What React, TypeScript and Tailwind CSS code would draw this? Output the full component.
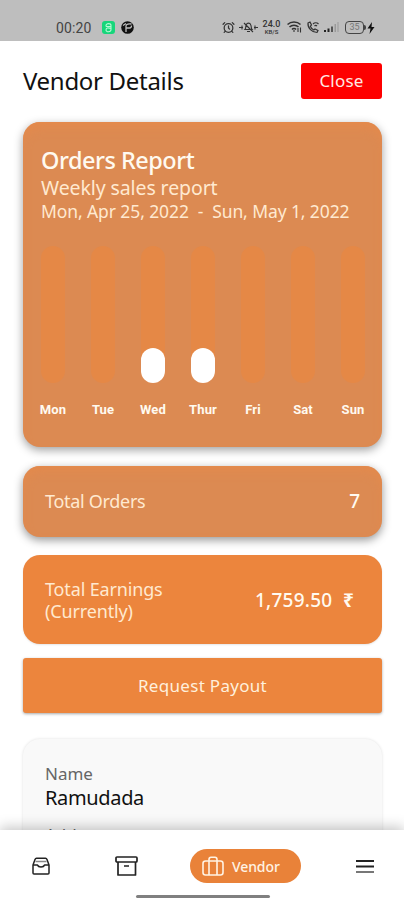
import { AlarmClock } from 'lucide-react';

const days = [
  { label: 'Mon', value: 0 },
  { label: 'Tue', value: 0 },
  { label: 'Wed', value: 35 },
  { label: 'Thur', value: 35 },
  { label: 'Fri', value: 0 },
  { label: 'Sat', value: 0 },
  { label: 'Sun', value: 0 },
];

function StatusBar() {
  return (
    <div className="flex h-[41px] shrink-0 items-start bg-[#bebebe] pt-[20px] pl-[56px] text-[#333]">
      <span className="w-[46px] font-['Roboto',sans-serif] text-[14px] leading-[16px] tracking-[0.1px] text-[#444]">00:20</span>
      <svg width="13" height="14" viewBox="0 0 13 14" className="mt-px shrink-0">
        <rect width="13" height="13" rx="3" fill="#17d67b" />
        <path d="M4 5.500V4.500C4 2 9 2 9 4.500V8.500c0 3-5 3-5 .5S6 6.500 9 7.500M4 5.500h5" fill="none" stroke="#b5fbd4" strokeWidth="1.1" />
      </svg>
      <svg width="13" height="14" viewBox="0 0 13 14" className="ml-[6px] shrink-0">
        <circle cx="6.5" cy="7.5" r="6.3" fill="#111" />
        <path d="M5 12V6C5 4 8 3.500 10.500 4M5 8h3.500c2 0 2-2.500 2-2.500M2 5.500l3-2" fill="none" stroke="#bebebe" strokeWidth="1.3" />
      </svg>
      <AlarmClock size={13} strokeWidth={2.3} className="mt-px ml-[88px] shrink-0" />
      <svg width="19" height="14" viewBox="0 0 19 14" className="ml-[4px] shrink-0" fill="none" stroke="#333" strokeWidth="1.1">
        <path d="M0 7.500h4M15 7.500h4M3 5.500v4M16 5.500v4M6 9.500c1-1 .5-3 1.200-4.500C8 2.500 11 2.500 11.800 5c.7 1.500.2 3.500 1.200 4.500zM8 11.500h3M5 3l9 9" />
      </svg>
      <div className="ml-[4px] flex w-[19px] flex-col items-center gap-[1px] font-['Roboto',sans-serif] font-medium">
        <span className="h-[8px] text-[9px] leading-[8px]">24.0</span>
        <span className="h-[6px] text-[6px] leading-[6px]">KB/S</span>
      </div>
      <svg width="15" height="14" viewBox="0 0 15 14" className="ml-[6px] shrink-0" fill="none" stroke="#333" strokeWidth="1.5">
        <path d="M.5 4.500C4 1 10 1 13.500 4.500M2.500 7c2.500-2.500 6.500-2.500 9 0M5 9.500c1-1.200 3-1.200 4 0" />
        <path d="M7 10v2M11 8v4M13.500 7.500v5" strokeWidth="1.100" />
      </svg>
      <svg width="12" height="14" viewBox="0 0 12 14" className="ml-[5px] shrink-0" fill="none" stroke="#333" strokeWidth="1.2">
        <path d="M1 3l2-1 1.500 3L3.300 6.300c.7 1.700 2 3 3.500 3.700L8 9l3 1.500-1 2C5 12.500.5 8 1 3z" />
        <path d="M6 4c1.500-1.500 4-1.500 5.500 0M7.500 6c.7-.7 1.800-.7 2.500 0" />
      </svg>
      <svg width="15" height="14" viewBox="0 0 15 14" className="ml-[5px] shrink-0">
        <path d="M0 10h2v2H0zM3.500 8.500h2V12h-2z" fill="#222" />
        <path d="M7 6.500h2V12H7z" fill="#555" />
        <path d="M10.500 4h1.500v8h-1.500zM13.500 2h1v10h-1z" fill="#999" />
      </svg>
      <div className="mt-px ml-[6px] flex h-[13px] w-[19px] shrink-0 items-center justify-center rounded-[4px] border border-[#444] font-['Roboto',sans-serif] text-[9px] leading-none text-[#777]">
        35
      </div>
      <div className="mt-[5px] h-[5px] w-[2px] rounded-r bg-[#444]" />
      <svg width="8" height="14" viewBox="0 0 8 14" className="mt-px ml-[1px] shrink-0">
        <path d="M5 1L.5 7.500H3.500L2.500 13 7.500 6H4.500z" fill="#111" />
      </svg>
    </div>
  );
}

function OrdersReport() {
  return (
    <div className="mt-[23px] h-[325px] rounded-[17px] bg-[#dc8a52] pt-[24px] pr-[4px] pl-[5px] text-[#ffe9d0] shadow-[0_3px_10px_rgba(0,0,0,0.38),inset_0_8px_12px_-4px_#e68a4b]">
      <div className="pl-[13px] whitespace-nowrap">
        <h2 className="text-[23.5px] leading-[28px] font-medium tracking-[-0.5px] text-[#fffaf0]">Orders Report</h2>
        <p className="text-[19.5px] leading-[27px] tracking-[-0.1px]">Weekly sales report</p>
        <p className="text-[17.5px] leading-[21px] tracking-[-0.1px] whitespace-pre">Mon, Apr 25, 2022  -  Sun, May 1, 2022</p>
      </div>
      <div className="mt-[24px] flex">
        {days.map((day) => (
          <div key={day.label} className="flex flex-1 flex-col items-center">
            <div className="flex h-[137px] w-[24px] items-end rounded-full bg-[#e58846]">
              <div className="w-full rounded-full bg-white" style={{ height: day.value }} />
            </div>
            <span className="mt-[19px] font-['Roboto',sans-serif] text-[13px] leading-[16px] font-bold tracking-[0.1px] text-[#fffaf0]">
              {day.label}
            </span>
          </div>
        ))}
      </div>
    </div>
  );
}

function BottomNav() {
  return (
    <nav className="relative flex h-[70px] shrink-0 items-start bg-white shadow-[0_-3px_12px_rgba(0,0,0,0.22)]">
      <svg width="18" height="18" viewBox="0 0 18 18" className="mt-[27px] ml-[32px]" fill="none" stroke="#222" strokeWidth="1.5" strokeLinejoin="round">
        <path d="M1 8L3 2.500c.3-.8.7-1.300 1.500-1.300h9c.8 0 1.200.5 1.500 1.300L17 8v8c0 .6-.4 1-1 1H2c-.6 0-1-.4-1-1z" />
        <path d="M1 8h4.500c.5 1.500 1.500 2 3.500 2s3-.5 3.500-2H17" />
        <path d="M3.500 4.500h11" stroke="#888" />
      </svg>
      <svg width="23" height="20" viewBox="0 0 23 20" className="mt-[26px] ml-[65px]" fill="none" stroke="#222" strokeWidth="1.7" strokeLinejoin="round">
        <rect x="1" y="1" width="21" height="5" rx="1" />
        <path d="M3 6v13h17.500V6M9 10h5" />
      </svg>
      <div className="mt-[19px] ml-[52px] flex h-[34px] w-[111px] items-center rounded-full bg-[#e98239] pl-[12px] text-[#fff3e4]">
        <svg width="22" height="20" viewBox="0 0 22 20" fill="none" stroke="currentColor" strokeWidth="1.6">
          <rect x="1" y="5" width="20" height="14" rx="2.500" />
          <path d="M7 19V3.500c0-1.400.8-2.300 2-2.300h4c1.200 0 2 .9 2 2.300V19" />
        </svg>
        <span className="ml-[8px] text-[14px] font-medium tracking-[-0.1px]">Vendor</span>
      </div>
      <svg width="18" height="14" viewBox="0 0 18 14" className="mt-[29px] ml-[55px]">
        <path d="M0 1h18v2H0zM0 6.500h18v2H0z" fill="#222" />
        <path d="M0 12h18v2H0z" fill="#777" />
      </svg>
      <div className="absolute top-[65px] left-[136px] h-[3px] w-[134px] rounded-full bg-[#808080]" />
    </nav>
  );
}

export default function App() {
  return (
    <div className="flex h-[900px] w-[404px] flex-col overflow-hidden bg-white font-['Noto_Sans',sans-serif]">
      <StatusBar />
      <main className="flex-1 overflow-hidden pt-[22px] pr-[22px] pl-[23px]">
        <div className="flex h-[36px] items-center justify-between">
          <h1 className="text-[24px] leading-[36px] tracking-[-0.3px] text-[#111]">Vendor Details</h1>
          <button className="h-[36px] w-[81px] rounded-[3px] bg-[#fe0000] text-[17px] tracking-[0.2px] text-[#ffe9e4]">Close</button>
        </div>
        <OrdersReport />
        <div className="mt-[19px] flex h-[71px] items-center justify-between rounded-[17px] bg-[#dc8a52] px-[22px] text-[#ffe9d0] shadow-[0_3px_10px_rgba(0,0,0,0.42),inset_0_6px_12px_-3px_#e68a4b]">
          <span className="text-[18px] tracking-[-0.3px]">Total Orders</span>
          <span className="text-[19px] font-medium text-[#fffaf0]">7</span>
        </div>
        <div className="mt-[18px] flex h-[89px] items-center justify-between rounded-[17px] bg-[#ec853d] pr-[28px] pl-[22px] text-[#ffe9d0] shadow-[0_1px_2px_rgba(0,0,0,0.1)]">
          <span className="text-[18px] leading-[22px] tracking-[-0.15px]">
            Total Earnings
            <br />
            (Currently)
          </span>
          <span className="pt-[2px] text-[19px] font-medium tracking-[0.25px] whitespace-pre text-[#fffaf0]">
            1,759.50  <span className="font-bold">₹</span>
          </span>
        </div>
        <button className="mt-[14px] h-[55px] w-full rounded-[3px] bg-[#ec853d] text-[17px] tracking-[0.3px] text-[#fff0dc] shadow-[0_1px_3px_rgba(0,0,0,0.35)]">
          Request Payout
        </button>
        <div className="mt-[26px] h-[160px] rounded-[17px] bg-[#f9f9f9] px-[22px] pt-[23px] shadow-[0_0_3px_rgba(0,0,0,0.13)]">
          <p className="text-[17px] leading-[23px] text-[#666]">Name</p>
          <p className="text-[20px] leading-[26px] tracking-[-0.35px] text-[#111]">Ramudada</p>
          <p className="mt-[12px] text-[17px] leading-[23px] text-[#666]">Address</p>
        </div>
      </main>
      <BottomNav />
    </div>
  );
}
